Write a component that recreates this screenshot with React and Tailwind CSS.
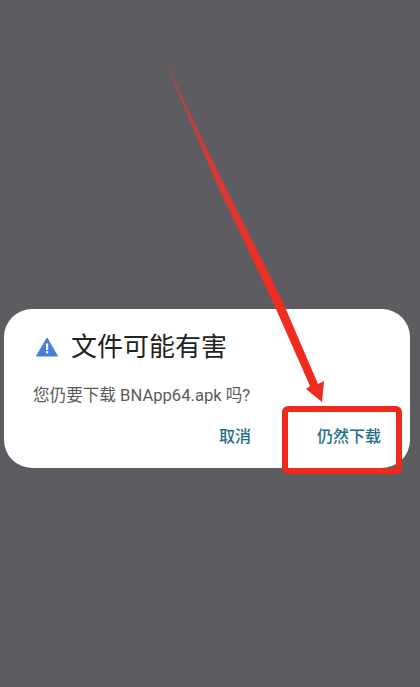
export default function App() {
  return (
    <div className="relative h-[687px] w-[420px] overflow-hidden bg-[#5c5c61] pt-[309px] pl-1 font-['Roboto','Noto_Sans_CJK_SC',sans-serif]">
      {/* Dialog */}
      <div className="flex h-[159px] w-[406px] flex-col rounded-[28px] bg-white">
        <div className="mt-[20px] ml-[32px] flex items-center gap-[13px]">
          <svg width="22" height="20" viewBox="0 0 22 20">
            <path d="M11 1 L21.5 19 L0.5 19 Z" fill="#4a7fd6" stroke="#4a7fd6" strokeLinejoin="round" />
            <rect x="10" y="6.5" width="2.2" height="6.5" fill="#fff" />
            <rect x="10" y="14.2" width="2.2" height="2.2" fill="#fff" />
          </svg>
          <h1 className="text-[26px] leading-9 font-normal text-[#222]">文件可能有害</h1>
        </div>
        <p className="mt-[19px] ml-[29px] text-[16.6px] leading-6 text-[#5a5a5a]">您仍要下载 BNApp64.apk 吗?</p>
        <div className="mt-[17px] flex justify-end gap-[66px] pr-[29px] text-[16px] leading-6 font-medium text-[#1d6f87]">
          <button>取消</button>
          <button>仍然下载</button>
        </div>
      </div>

      {/* Annotation */}
      <svg className="absolute top-0 left-0" width="420" height="687" viewBox="0 0 420 687">
        <defs>
          <linearGradient id="shaft" gradientUnits="userSpaceOnUse" x1="160" y1="50" x2="320" y2="390">
            <stop offset="0" stopColor="#c9403f" stopOpacity="0.1" />
            <stop offset="0.1" stopColor="#c9403f" stopOpacity="0.7" />
            <stop offset="0.35" stopColor="#d63a35" />
            <stop offset="0.65" stopColor="#ee2f24" />
            <stop offset="1" stopColor="#f02a1c" />
          </linearGradient>
        </defs>
        <path d="M160 50 L215 180 L272 300 L310 386 L306 389 L322 402 L324 381 L318 384 L282 300 L222 180 Z" fill="url(#shaft)" />
      </svg>
      <div className="absolute top-[406px] left-[282px] h-[68px] w-[120px] rounded-[6px] border-[6px] border-[#ee2a1b]" />
    </div>
  )
}
